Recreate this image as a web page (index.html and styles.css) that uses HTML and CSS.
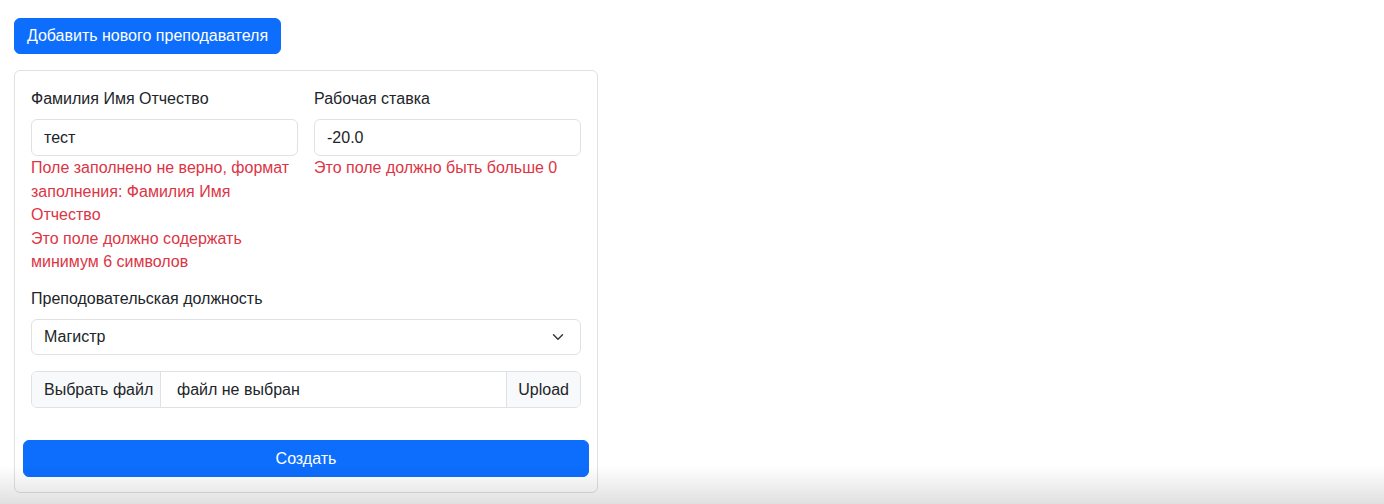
FILE: index.html
```html
<!DOCTYPE html>
<html lang="ru">
<head>
<meta charset="utf-8">
<title>Преподаватели</title>
<link rel="stylesheet" href="styles.css">
</head>
<body>
<main class="page">
  <button class="btn btn-primary btn-add" type="button">Добавить нового преподавателя</button>
  <form class="card">
    <div class="card-body">
      <div class="row">
        <div class="field">
          <label class="label">Фамилия Имя Отчество</label>
          <input class="control" type="text" value="тест">
          <div class="feedback">
            <div>Поле заполнено не верно, формат заполнения: Фамилия Имя Отчество</div>
            <div>Это поле должно содержать минимум 6 символов</div>
          </div>
        </div>
        <div class="field">
          <label class="label">Рабочая ставка</label>
          <input class="control" type="text" value="-20.0">
          <div class="feedback">
            <div>Это поле должно быть больше 0</div>
          </div>
        </div>
      </div>
      <div class="field field-full">
        <label class="label">Преподовательская должность</label>
        <div class="select">
          <span>Магистр</span>
          <svg class="chevron" width="16" height="16" viewBox="0 0 16 16" fill="none" stroke="#343a40" stroke-width="2" stroke-linecap="round" stroke-linejoin="round"><path d="m2 5 6 6 6-6"/></svg>
        </div>
      </div>
      <div class="file-group">
        <span class="file-btn">Выбрать файл</span>
        <span class="file-name">файл не выбран</span>
        <span class="file-addon">Upload</span>
      </div>
    </div>
    <div class="card-footer">
      <button class="btn btn-primary btn-block" type="button">Создать</button>
    </div>
  </form>
</main>
</body>
</html>
```
FILE: styles.css
```css
* { box-sizing: border-box; }
html, body { margin: 0; padding: 0; background: #fff; }
body {
  font-family: "Liberation Sans", Arial, sans-serif;
  font-size: 16px;
  line-height: 1.5;
  color: #212529;
  min-height: 504px;
}
body::after {
  content: "";
  position: fixed;
  left: 0;
  right: 0;
  bottom: 0;
  height: 38px;
  background: linear-gradient(to bottom, rgba(0,0,0,0), rgba(0,0,0,0.12));
  pointer-events: none;
}
.page {
  padding: 18px 14px;
  display: flex;
  flex-direction: column;
  align-items: flex-start;
  gap: 16px;
}
.btn {
  font-family: inherit;
  font-size: 16px;
  line-height: 24px;
  border: 1px solid transparent;
  border-radius: 6px;
  padding: 6px 12px 4px;
  cursor: pointer;
  white-space: nowrap;
}
.btn-primary {
  background: #0d6efd;
  border-color: #0d6efd;
  color: #fff;
}
.btn-add { height: 36px; width: 267px; padding: 5px 0; }
.card {
  width: 584px;
  border: 1px solid #dee2e6;
  border-radius: 6px;
  background: #fff;
}
.card-body {
  padding: 16px 16px 0;
  display: flex;
  flex-direction: column;
  gap: 16px;
}
.row {
  display: grid;
  grid-template-columns: 267px 267px;
  gap: 16px;
  margin-bottom: -3px;
}
.field { display: flex; flex-direction: column; }
.label { line-height: 24px; margin-bottom: 8px; }
.control {
  font-family: inherit;
  font-size: 16px;
  height: 37px;
  padding: 6px 12px;
  border: 1px solid #dee2e6;
  border-radius: 6px;
  color: #212529;
  background: #fff;
  width: 100%;
}
.feedback {
  color: #dc3545;
  line-height: 23.5px;
  padding-right: 8px;
}
.select {
  height: 36px;
  border: 1px solid #dee2e6;
  border-radius: 6px;
  display: flex;
  align-items: center;
  justify-content: space-between;
  padding: 1px 16px 0 12px;
}
.chevron { width: 12px; height: 12px; }
.file-group {
  display: flex;
  height: 37px;
  border: 1px solid #dee2e6;
  border-radius: 6px;
  overflow: hidden;
  white-space: nowrap;
}
.file-btn, .file-addon {
  background: #f8f9fa;
  display: flex;
  align-items: center;
  padding: 2px 12px 0;
  flex-shrink: 0;
}
.file-btn { border-right: 1px solid #dee2e6; width: 129px; }
.file-name {
  flex: 1;
  display: flex;
  align-items: center;
  padding: 2px 16px 0;
}
.file-addon { border-left: 1px solid #dee2e6; padding: 2px 11px 0; }
.card-footer { padding: 32px 8px 15px; }
.btn-block { width: 100%; height: 37px; }
```
